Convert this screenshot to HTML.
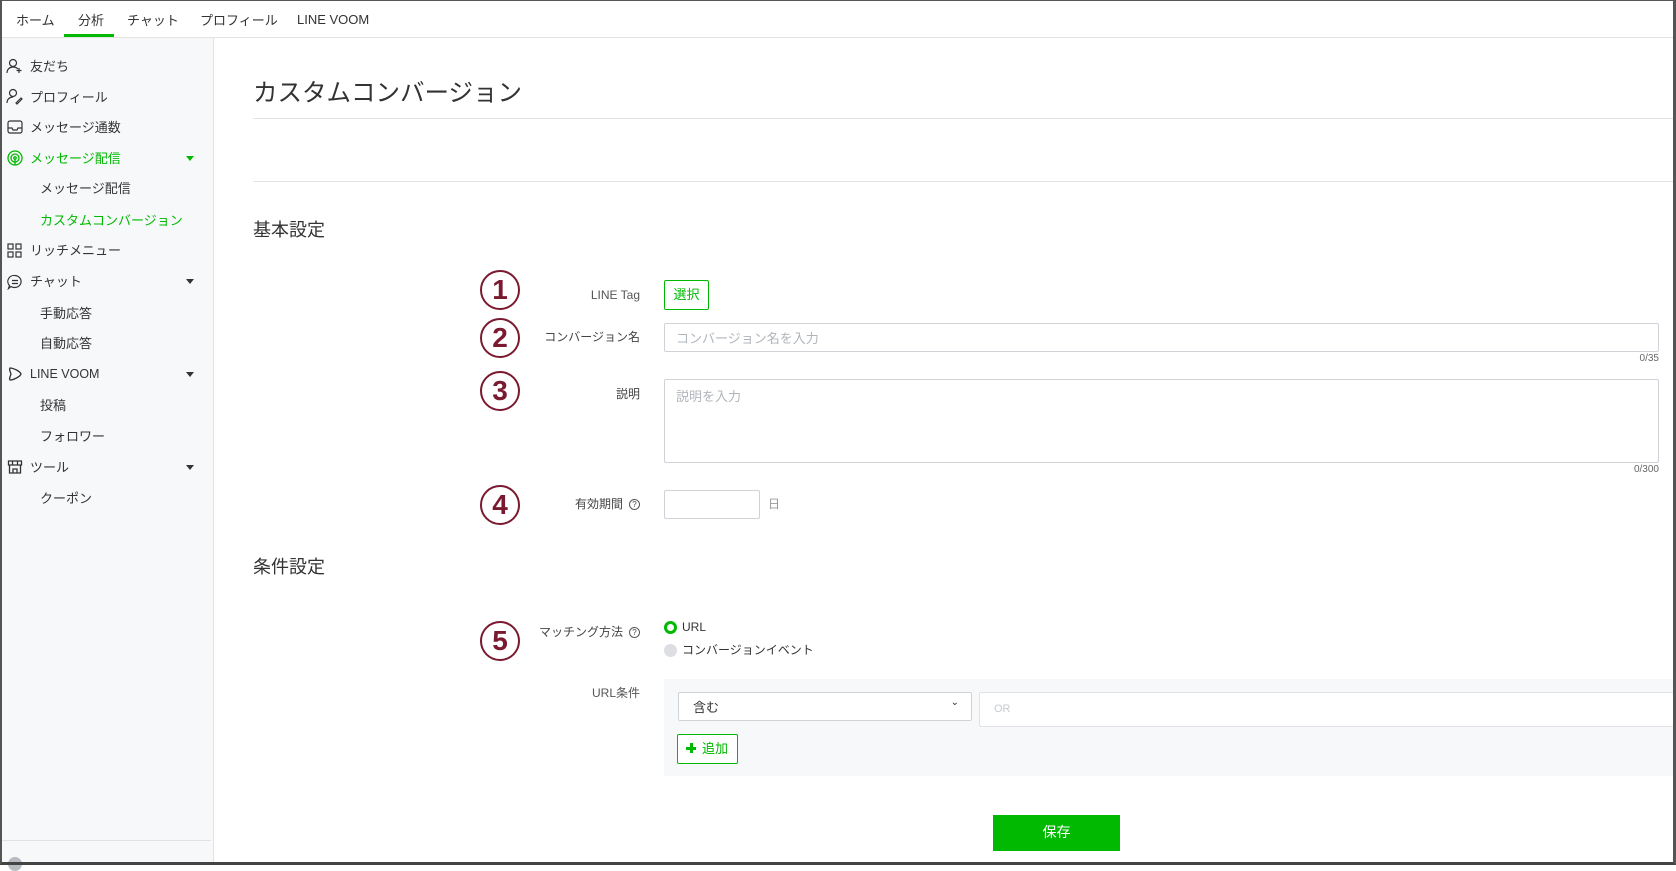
<!DOCTYPE html>
<html><head><meta charset="utf-8"><style>
*{box-sizing:border-box;margin:0;padding:0}
body{width:1676px;height:865px;overflow:hidden;background:#fff;font-family:"Liberation Sans","Noto Sans CJK JP",sans-serif;color:#333;position:relative}
.a{position:absolute}
.frame{position:absolute;left:0;top:0;width:1676px;height:865px;border-top:1px solid #555;border-left:2px solid #555;border-right:3px solid #555;border-bottom:3px solid #444;z-index:10;pointer-events:none}
.nav{font-size:13px;color:#333;top:10px}
.side{position:absolute;left:0;top:38px;width:214px;height:827px;background:#f7f8fa;border-right:1px solid #dfe2e6}
.si{position:absolute;font-size:13px;color:#333;left:30px}
.sub{left:40px}
.arr{position:absolute;left:186px;width:0;height:0;border-left:4px solid transparent;border-right:4px solid transparent;border-top:5px solid #333}
.circ{position:absolute;width:40px;height:40px;border:2px solid #7a1a30;border-radius:50%;color:#7a1a30;font-weight:bold;font-size:28px;text-align:center;line-height:36px;left:480px}
.lb{position:absolute;font-size:12px;color:#444;right:1036px;text-align:right;white-space:nowrap}
.inp{position:absolute;border:1px solid #cfd3d8;border-radius:2px;background:#fff}
.ph{font-size:13px;color:#b0b5bb;position:absolute;left:11px}
.q{display:inline-block;width:11px;height:11px;border:1px solid #555;border-radius:50%;font-size:8px;line-height:9px;text-align:center;margin-left:6px;vertical-align:1px}
.hr{position:absolute;left:253px;width:1420px;height:1px;background:#e3e3e3}
</style></head><body>
<div class="frame"></div>
<div class="a nav" style="left:16px">ホーム</div>
<div class="a nav" style="left:78px">分析</div>
<div class="a" style="left:64px;top:34px;width:50px;height:3px;background:#00b900"></div>
<div class="a nav" style="left:127px">チャット</div>
<div class="a nav" style="left:200px">プロフィール</div>
<div class="a nav" style="left:297px;top:12px">LINE VOOM</div>
<div class="a" style="left:0;top:37px;width:1676px;height:1px;background:#e3e3e3"></div>
<div class="side">
<svg class="a" style="left:6px;top:20px" width="17" height="17" viewBox="0 0 17 17" fill="none" stroke="#333" stroke-width="1.2"><circle cx="7" cy="5" r="3.5"/><path d="M1 15c0-4 3-6 6-6s4 1 5 2M13 10v5M10.5 12.5h5"/></svg>
<div class="si" style="top:18px">友だち</div>
<svg class="a" style="left:6px;top:50px" width="17" height="17" viewBox="0 0 17 17" fill="none" stroke="#333" stroke-width="1.2"><circle cx="7" cy="5" r="3.5"/><path d="M1 15c0-4 3-6 6-6M10 15l5-5 1 1-5 5z"/></svg>
<div class="si" style="top:49px">プロフィール</div>
<svg class="a" style="left:7px;top:81px" width="16" height="16" viewBox="0 0 16 16" fill="none" stroke="#333" stroke-width="1.2"><rect x="1" y="2" width="14" height="12" rx="2"/><path d="M1 9h4l1 2h4l1-2h4"/></svg>
<div class="si" style="top:79px">メッセージ通数</div>
<svg class="a" style="left:7px;top:112px" width="16" height="16" viewBox="0 0 16 16" fill="none" stroke="#00b900" stroke-width="1.3"><circle cx="8" cy="8" r="7"/><circle cx="8" cy="8" r="4"/><circle cx="8" cy="8" r="1.2"/><path d="M8 9v6"/></svg>
<div class="si" style="top:110px;color:#00b900">メッセージ配信</div>
<div class="arr" style="top:118px;border-top-color:#00b900"></div>
<div class="si sub" style="top:140px">メッセージ配信</div>
<div class="si sub" style="top:172px;color:#00b900">カスタムコンバージョン</div>
<svg class="a" style="left:7px;top:205px" width="15" height="15" viewBox="0 0 15 15" fill="none" stroke="#333" stroke-width="1.2"><rect x="1" y="1" width="5" height="5"/><rect x="9" y="1" width="5" height="5"/><rect x="1" y="9" width="5" height="5"/><rect x="9" y="9" width="5" height="5"/></svg>
<div class="si" style="top:202px">リッチメニュー</div>
<svg class="a" style="left:7px;top:236px" width="16" height="16" viewBox="0 0 16 16" fill="none" stroke="#333" stroke-width="1.2"><path d="M8 1.5a6.5 6 0 1 1-4 11L1.5 14.5l1-3A6.5 6 0 0 1 8 1.5z"/><path d="M5 6.5h6M5 9.5h6"/></svg>
<div class="si" style="top:233px">チャット</div>
<div class="arr" style="top:241px"></div>
<div class="si sub" style="top:265px">手動応答</div>
<div class="si sub" style="top:295px">自動応答</div>
<svg class="a" style="left:7px;top:328px" width="16" height="16" viewBox="0 0 16 16" fill="none" stroke="#333" stroke-width="1.3"><path d="M3 2c3 0 10 3 11 6-1 3-8 6-11 6-1-1 0-3 1-6-1-3-2-5-1-6z"/></svg>
<div class="si" style="top:329px;font-size:12.5px">LINE VOOM</div>
<div class="arr" style="top:334px"></div>
<div class="si sub" style="top:357px">投稿</div>
<div class="si sub" style="top:388px">フォロワー</div>
<svg class="a" style="left:7px;top:421px" width="16" height="16" viewBox="0 0 16 16" fill="none" stroke="#333" stroke-width="1.3"><path d="M1.5 2h13v4h-13zM2.5 6v8h11V6M6 14v-4h4v4M5.5 2v4M10.5 2v4"/></svg>
<div class="si" style="top:419px">ツール</div>
<div class="arr" style="top:427px"></div>
<div class="si sub" style="top:450px">クーポン</div>
<div class="a" style="left:0;top:802px;width:211px;height:1px;background:#dfe2e6"></div>
<div class="a" style="left:8px;top:819px;width:14px;height:14px;border-radius:50%;background:#b8bcc2"></div>
</div>
<div class="a" style="left:253px;top:74px;font-size:24.5px;color:#333">カスタムコンバージョン</div>
<div class="hr" style="top:118px"></div>
<div class="hr" style="top:181px"></div>
<div class="a" style="left:253px;top:216px;font-size:18px">基本設定</div>
<div class="a" style="left:253px;top:553px;font-size:18px">条件設定</div>

<div class="circ" style="top:270px">1</div>
<div class="circ" style="top:318px">2</div>
<div class="circ" style="top:371px">3</div>
<div class="circ" style="top:485px">4</div>
<div class="circ" style="top:621px">5</div>

<div class="lb" style="top:288px;color:#555">LINE Tag</div>
<div class="a" style="left:664px;top:280px;width:45px;height:30px;border:1px solid #00b900;border-radius:2px;color:#00b900;font-size:13px;text-align:center;line-height:27px">選択</div>

<div class="lb" style="top:328px">コンバージョン名</div>
<div class="inp" style="left:664px;top:323px;width:995px;height:29px"><span class="ph" style="top:4px">コンバージョン名を入力</span></div>
<div class="a" style="right:17px;top:353px;font-size:10px;color:#666">0/35</div>

<div class="lb" style="top:385px">説明</div>
<div class="inp" style="left:664px;top:379px;width:995px;height:84px"><span class="ph" style="top:6px">説明を入力</span></div>
<div class="a" style="right:17px;top:464px;font-size:10px;color:#666">0/300</div>

<div class="lb" style="top:495px">有効期間<span class="q">?</span></div>
<div class="inp" style="left:664px;top:490px;width:96px;height:29px"></div>
<div class="a" style="left:768px;top:495px;font-size:12px;color:#999">日</div>

<div class="lb" style="top:623px">マッチング方法<span class="q">?</span></div>
<div class="a" style="left:664px;top:621px;width:13px;height:13px;border-radius:50%;border:3.5px solid #00b900;background:#fff"></div>
<div class="a" style="left:682px;top:620px;font-size:12px;color:#333">URL</div>
<div class="a" style="left:664px;top:644px;width:13px;height:13px;border-radius:50%;background:#dcdee3"></div>
<div class="a" style="left:682px;top:641px;font-size:12px;color:#333">コンバージョンイベント</div>

<div class="lb" style="top:684px;color:#555">URL条件</div>
<div class="a" style="left:664px;top:679px;width:1009px;height:97px;background:#f7f8fa"></div>
<div class="inp" style="left:678px;top:692px;width:294px;height:29px"><span class="a" style="left:14px;top:4px;font-size:13px;color:#333">含む</span><span class="a" style="right:12px;top:4px;font-size:10px;color:#333">⌄</span></div>
<div class="inp" style="left:979px;top:692px;width:694px;height:35px;border-right:none;border-color:#dfe2e6"><span class="a" style="left:14px;top:10px;font-size:11px;color:#c6cad0">OR</span></div>
<div class="a" style="left:677px;top:734px;width:61px;height:30px;border:1px solid #00b900;border-radius:2px;background:#fff;color:#00b900;font-size:13px;line-height:27px;padding-left:24px">追加</div>
<div class="a" style="left:686px;top:743px;width:10px;height:10px"><div class="a" style="left:4px;top:0;width:2.5px;height:10px;background:#00b900"></div><div class="a" style="left:0;top:4px;width:10px;height:2.5px;background:#00b900"></div></div>

<div class="a" style="left:993px;top:815px;width:127px;height:36px;background:#00b900;color:#fff;font-size:14px;text-align:center;line-height:34px">保存</div>
</body></html>
